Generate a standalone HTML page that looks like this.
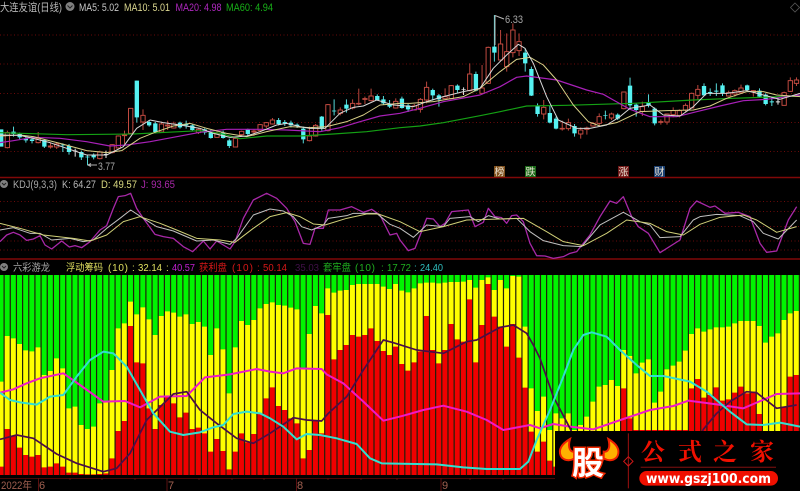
<!DOCTYPE html>
<html><head><meta charset="utf-8"><style>
html,body{margin:0;padding:0;background:#000;width:800px;height:491px;overflow:hidden}
svg{display:block;position:absolute;left:0;top:0}
text{font-family:"Liberation Sans","Noto Sans CJK SC",sans-serif}
.n{vector-effect:non-scaling-stroke;fill:none;stroke-linejoin:round}
</style></head><body>
<svg width="800" height="491" viewBox="0 0 800 491" xmlns="http://www.w3.org/2000/svg" style="filter:blur(.3px)">
<rect width="800" height="491" fill="#000"/>
<!-- grid main -->
<g stroke="#6a0a0a" stroke-width="1" stroke-dasharray="1 2.5">
<path d="M0 35H800M0 64H800M0 93.5H800M0 122.5H800M0 151.5H800"/>
<path d="M0 201.5H800M0 211.5H800M0 226.5H800M0 241H800M0 250H800"/>
</g>
<path d="M0 177.5H800M0 259H800" stroke="#800808" stroke-width="1.6"/>
<!-- candles -->
<g transform="translate(1.2,0) scale(6.165,.33333)">
<path class="n" stroke="#b8453c" stroke-width="1" d="M1 392V445M6 396V430M8 428V446M9 428V447M16 452V478M18 432V460M19 406V446M20 392V432M21 325V402M23 328V390M26 365V396M27 362V390M28 365V386M32 384V402M35 394V412M38 414V441M39 392V410M41 388V408M42 372V394M43 366V384M44 354V374M50 380V424M51 372V410M53 312V394M55 322V346M57 298V328M58 266V316M59 290V312M60 266V304M64 295V326M67 312V330M68 294V338M69 245V310M72 265V296M73 255V296M76 190V274M78 195V282M79 140V252M81 90V182M82 100V215M83 70V172M84 100V168M88 300V358M91 362V392M92 356V392M94 382V416M95 380V404M96 366V380M97 340V378M99 338V360M101 276V328M104 305V348M107 358V374M108 340V374M109 322V352M110 328V352M111 310V336M112 278V326M113 255V298M118 272V290M119 268V290M120 254V280M122 270V290M127 275V316M128 232V276M129 232V258"/>
<path class="n" stroke="#55d8d8" stroke-width="1" d="M2 380V410M3 398V418M4 408V428M5 408V430M7 418V444M10 430V456M11 432V464M13 452V480M14 464V496M15 460V478M24 360V380M25 366V400M22 242V368M29 365V386M30 362V386M31 372V392M33 385V404M34 390V416M36 392V416M37 416V444M40 386V406M45 354V376M46 360V378M47 362V382M48 370V384M49 380V430M52 348V392M54 298V346M56 298V338M61 283V302M62 288V314M63 300V324M65 290V326M66 312V336M70 266V302M71 282V320M74 253V278M77 215V274M80 45V185M85 145V215M86 200V288M87 310V350M89 318V370M90 350V388M93 372V410M98 332V358M100 340V360M102 233V330M103 310V350M105 283V322M106 322V376M114 250V288M115 265V288M116 250V288M117 250V288M121 254V272M123 265V292M124 280V316M125 290V318"/>
<path class="n" stroke="#e8e8e8" stroke-width="1" d="M12 446V470M17 452V474M75 262V285M126 296V314"/>
<path class="n" style="fill:#000" stroke="#c04a40" stroke-width="1" d="M.65 398h.7V443h-.7zM5.65 415h.7V428h-.7zM7.65 438h.7V441h-.7zM8.65 432h.7V441h-.7zM15.65 456h.7V476h-.7zM17.65 434h.7V458h-.7zM18.65 408h.7V444h-.7zM19.65 405h.7V407h-.7zM20.65 325h.7V400h-.7zM22.65 346h.7V366h-.7zM25.65 372h.7V396h-.7zM26.65 375h.7V378h-.7zM27.65 372h.7V384h-.7zM31.65 388h.7V398h-.7zM34.65 400h.7V412h-.7zM37.65 415h.7V441h-.7zM38.65 394h.7V404h-.7zM40.65 393h.7V396h-.7zM41.65 374h.7V392h-.7zM42.65 368h.7V378h-.7zM43.65 360h.7V372h-.7zM49.65 408h.7V422h-.7zM50.65 376h.7V408h-.7zM52.65 314h.7V392h-.7zM54.65 330h.7V340h-.7zM56.65 310h.7V324h-.7zM57.65 310h.7V312h-.7zM58.65 296h.7V298h-.7zM59.65 288h.7V302h-.7zM63.65 304h.7V324h-.7zM66.65 318h.7V330h-.7zM67.65 298h.7V328h-.7zM68.65 262h.7V300h-.7zM71.65 290h.7V296h-.7zM72.65 257h.7V296h-.7zM75.65 222h.7V272h-.7zM77.65 264h.7V280h-.7zM78.65 142h.7V250h-.7zM80.65 132h.7V180h-.7zM81.65 155h.7V200h-.7zM82.65 90h.7V158h-.7zM83.65 125h.7V152h-.7zM87.65 322h.7V342h-.7zM90.65 385h.7V387h-.7zM91.65 368h.7V386h-.7zM93.65 390h.7V402h-.7zM94.65 384h.7V388h-.7zM95.65 370h.7V378h-.7zM96.65 350h.7V370h-.7zM98.65 342h.7V354h-.7zM100.65 276h.7V326h-.7zM103.65 320h.7V334h-.7zM106.65 365h.7V367h-.7zM107.65 342h.7V366h-.7zM108.65 332h.7V344h-.7zM109.65 332h.7V346h-.7zM110.65 316h.7V330h-.7zM111.65 280h.7V324h-.7zM112.65 268h.7V286h-.7zM117.65 278h.7V288h-.7zM118.65 272h.7V282h-.7zM119.65 264h.7V278h-.7zM121.65 272h.7V276h-.7zM126.65 278h.7V316h-.7zM127.65 242h.7V274h-.7zM128.65 240h.7V250h-.7z"/>
<path fill="#55f2f2" d="M-.35 388h.7V440h-.7zM1.65 395h.7V402h-.7zM2.65 402h.7V412h-.7zM3.65 416h.7V421h-.7zM4.65 418h.7V423h-.7zM6.65 420h.7V440h-.7zM9.65 434h.7V436h-.7zM10.65 438h.7V456h-.7zM12.65 456h.7V472h-.7zM13.65 470h.7V472h-.7zM14.65 466h.7V472h-.7zM21.65 242h.7V352h-.7zM23.65 366h.7V376h-.7zM24.65 370h.7V396h-.7zM28.65 368h.7V382h-.7zM29.65 372h.7V376h-.7zM30.65 376h.7V390h-.7zM32.65 388h.7V398h-.7zM33.65 398h.7V414h-.7zM35.65 398h.7V414h-.7zM36.65 421h.7V438h-.7zM39.65 388h.7V402h-.7zM44.65 360h.7V372h-.7zM45.65 366h.7V370h-.7zM46.65 368h.7V376h-.7zM47.65 374h.7V378h-.7zM48.65 386h.7V418h-.7zM51.65 350h.7V384h-.7zM53.65 332h.7V334h-.7zM55.65 314h.7V326h-.7zM60.65 288h.7V300h-.7zM61.65 298h.7V310h-.7zM62.65 312h.7V320h-.7zM64.65 296h.7V324h-.7zM65.65 316h.7V328h-.7zM69.65 270h.7V286h-.7zM70.65 286h.7V298h-.7zM73.65 257h.7V270h-.7zM76.65 222h.7V272h-.7zM79.65 140h.7V158h-.7zM84.65 158h.7V190h-.7zM85.65 207h.7V287h-.7zM86.65 318h.7V342h-.7zM88.65 339h.7V368h-.7zM89.65 356h.7V386h-.7zM92.65 378h.7V400h-.7zM97.65 345h.7V347h-.7zM99.65 344h.7V356h-.7zM101.65 257h.7V316h-.7zM102.65 314h.7V330h-.7zM104.65 306h.7V316h-.7zM105.65 326h.7V370h-.7zM113.65 258h.7V286h-.7zM114.65 276h.7V279h-.7zM115.65 272h.7V275h-.7zM116.65 256h.7V280h-.7zM120.65 256h.7V270h-.7zM122.65 272h.7V290h-.7zM123.65 284h.7V312h-.7zM124.65 304h.7V307h-.7z"/>
<path fill="#e8e8e8" d="M11.65 452h.7V454h-.7zM16.65 462h.7V464h-.7zM74.65 268h.7V270h-.7zM125.65 304h.7V307h-.7z"/>
</g>
<!-- MA lines (coords are x*3,y*3) -->
<g transform="scale(.33333)">
<polyline class="n" stroke="#14a014" stroke-width="1.2" points="0,398 200,404 400,402 500,397 600,392 660,400 720,416 800,408 900,408 1000,402 1100,395 1200,383 1260,378 1330,368 1440,347 1500,335 1580,318 1700,316 1900,310 2080,300 2200,295 2400,288"/>
<polyline class="n" stroke="#a820b8" stroke-width="1.2" points="0,428 40,422 100,412 180,415 260,425 330,438 380,435 450,425 520,412 600,397 680,388 780,388 860,390 960,395 1020,383 1080,365 1140,348 1200,340 1260,325 1330,305 1440,285 1500,260 1550,232 1580,228 1670,240 1760,270 1810,283 1840,300 1890,328 1950,350 2030,350 2090,335 2160,318 2230,302 2300,298 2400,285"/>
<polyline class="n" stroke="#d8d088" stroke-width="1" points="0,408 60,405 100,410 180,430 260,452 320,458 365,452 420,415 470,395 520,378 570,370 620,385 680,400 740,410 800,395 870,380 930,383 980,380 1040,365 1090,345 1140,315 1200,310 1230,310 1300,305 1390,290 1440,265 1500,215 1550,178 1590,172 1630,195 1670,240 1720,315 1765,365 1800,378 1850,368 1920,335 2000,332 2080,330 2130,318 2180,295 2240,275 2290,275 2330,285 2400,290"/>
<polyline class="n" stroke="#d8d8d8" stroke-width="1" points="0,405 60,406 100,415 150,428 200,445 260,465 320,465 370,440 410,385 450,360 490,368 540,375 600,385 640,400 690,412 740,408 780,395 830,375 860,370 900,380 930,385 975,385 1020,340 1060,322 1090,318 1130,300 1180,315 1240,320 1280,305 1330,290 1390,275 1440,265 1480,205 1520,165 1555,133 1575,145 1600,190 1640,290 1675,360 1730,385 1770,385 1820,375 1860,350 1890,325 1950,315 1990,345 2040,348 2080,320 2120,280 2180,280 2240,272 2290,285 2340,298 2400,280"/>
<!-- KDJ: y offset 175*3=525 -->
<g transform="translate(0,525)">
<polyline class="n" stroke="#a828a8" stroke-width="1.3" points="0,200 20,180 40,172 60,180 80,196 100,192 120,182 135,210 155,222 185,198 208,216 225,212 245,218 270,200 300,165 320,152 340,100 355,65 375,62 392,55 410,100 430,130 465,178 490,185 520,190 550,215 578,230 610,198 630,222 650,198 690,222 705,200 730,130 760,75 800,55 830,70 860,100 885,140 910,205 930,208 945,160 970,160 985,105 1020,105 1055,95 1090,112 1115,103 1140,120 1170,180 1190,175 1200,195 1225,227 1245,220 1280,130 1300,132 1320,155 1335,145 1355,110 1405,105 1425,155 1450,142 1465,100 1485,125 1505,128 1520,145 1535,122 1550,120 1570,140 1590,205 1610,242 1635,243 1660,250 1690,245 1710,235 1730,230 1770,180 1800,125 1830,78 1850,85 1870,65 1895,125 1915,155 1945,175 1980,233 2040,195 2070,100 2090,78 2130,97 2145,93 2175,115 2215,112 2250,125 2280,205 2300,232 2330,228 2365,135 2390,95"/>
<polyline class="n" stroke="#c0c0c0" stroke-width="1" points="0,165 40,158 90,175 120,175 155,195 210,190 250,200 280,195 320,160 360,130 392,105 430,130 470,155 520,168 590,198 640,195 690,208 710,190 760,120 810,102 850,108 880,125 905,155 935,165 970,150 985,130 1040,122 1060,115 1130,115 1170,148 1200,160 1240,187 1280,150 1330,155 1350,130 1410,125 1435,140 1465,122 1500,132 1550,130 1590,170 1630,197 1690,212 1745,215 1800,150 1870,112 1920,140 1950,150 1980,188 2040,185 2080,135 2100,125 2150,118 2220,122 2260,140 2290,175 2335,192 2390,135"/>
<polyline class="n" stroke="#d0d078" stroke-width="1" points="0,145 60,160 130,180 220,190 270,198 320,180 370,140 420,125 480,145 530,165 590,190 660,195 705,202 760,160 810,125 860,113 900,125 940,147 975,150 1040,130 1100,117 1135,117 1200,140 1260,170 1330,155 1400,135 1500,132 1570,130 1640,170 1690,200 1750,212 1820,175 1880,135 1950,145 2000,170 2050,180 2100,148 2160,127 2230,120 2270,135 2330,172 2390,155"/>
</g>
</g>
<!-- annotations -->
<path d="M495 15.5V45M495 15.5L504 19" stroke="#b8b8b8" stroke-width="1" fill="none"/>
<path d="M88 165H97M88 165l3 -1.5M88 165l3 1.5" stroke="#b0b0b0" stroke-width="1" fill="none"/>
<text x="505" y="23" font-size="11" fill="#a8a8a8" textLength="18" lengthAdjust="spacingAndGlyphs">6.33</text>
<text x="98" y="170" font-size="11" fill="#a8a8a8" textLength="17" lengthAdjust="spacingAndGlyphs">3.77</text>
<path d="M795 3l4.500 4.500l-4.500 4.500l-4.500-4.500z" fill="none" stroke="#555" stroke-width=".8"/>
<!-- tag boxes -->
<g font-size="10" text-anchor="middle" fill="#e8e0d0">
<rect x="494" y="166" width="11" height="11" fill="#80501c"/><text x="499.500" y="175.500">榜</text>
<rect x="525" y="166" width="11" height="11" fill="#1a6a18"/><text x="530.500" y="175.500">跌</text>
<rect x="618" y="166" width="11" height="11" fill="#701818"/><text x="623.500" y="175.500">涨</text>
<rect x="654" y="166" width="11" height="11" fill="#1a3f70"/><text x="659.500" y="175.500">财</text>
</g>
<!-- headers -->
<text x="0" y="11" font-size="11" fill="#b8b8b8" textLength="62" lengthAdjust="spacingAndGlyphs">大连友谊(日线)</text>
<circle cx="70" cy="6.500" r="4.500" fill="#808080"/><path d="M67.500 5.500l2.500 2.500l2.500-2.500" stroke="#222" fill="none" stroke-width="1"/>
<g font-size="11">
<text x="79" y="11" fill="#c8c8c8" textLength="40" lengthAdjust="spacingAndGlyphs">MA5: 5.02</text>
<text x="124" y="11" fill="#dcd890" textLength="46" lengthAdjust="spacingAndGlyphs">MA10: 5.01</text>
<text x="175.500" y="11" fill="#b028c0" textLength="46" lengthAdjust="spacingAndGlyphs">MA20: 4.98</text>
<text x="226" y="11" fill="#18b018" textLength="47" lengthAdjust="spacingAndGlyphs">MA60: 4.94</text>
<text x="13" y="188" fill="#a8a8a8" textLength="44" lengthAdjust="spacingAndGlyphs">KDJ(9,3,3)</text>
<text x="62" y="188" fill="#b8b8b8" textLength="34" lengthAdjust="spacingAndGlyphs">K: 64.27</text>
<text x="101" y="188" fill="#d8d880" textLength="36" lengthAdjust="spacingAndGlyphs">D: 49.57</text>
<text x="141" y="188" fill="#a828a8" textLength="34" lengthAdjust="spacingAndGlyphs">J: 93.65</text>
</g>
<circle cx="4" cy="184" r="4" fill="#808080"/><path d="M2 183l2 2l2-2" stroke="#222" fill="none"/>
<circle cx="4" cy="267" r="4" fill="#808080"/><path d="M2 266l2 2l2-2" stroke="#222" fill="none"/>
<g font-size="10">
<text x="13" y="271" fill="#a8a8a8" textLength="37" lengthAdjust="spacingAndGlyphs">六彩游龙</text>
<text x="66" y="271" fill="#e0e060" textLength="37" lengthAdjust="spacingAndGlyphs">浮动筹码</text>
<text x="108" y="271" fill="#e0e060" textLength="20" lengthAdjust="spacing">(10)</text>
<text x="132" y="271" fill="#e0e060">:</text>
<text x="138" y="271" fill="#e0e060" textLength="24" lengthAdjust="spacingAndGlyphs">32.14</text>
<text x="166" y="271" fill="#e0e060">:</text>
<text x="172" y="271" fill="#c020d0" textLength="23" lengthAdjust="spacingAndGlyphs">40.57</text>
<text x="199" y="271" fill="#d81818" textLength="28" lengthAdjust="spacingAndGlyphs">获利盘</text>
<text x="232" y="271" fill="#d81818" textLength="21" lengthAdjust="spacing">(10)</text>
<text x="257" y="271" fill="#d81818">:</text>
<text x="263" y="271" fill="#d81818" textLength="24" lengthAdjust="spacingAndGlyphs">50.14</text>
<text x="295" y="271" fill="#401048" textLength="24" lengthAdjust="spacingAndGlyphs">35.03</text>
<text x="323" y="271" fill="#20b020" textLength="28" lengthAdjust="spacingAndGlyphs">套牢盘</text>
<text x="355" y="271" fill="#20b020" textLength="20" lengthAdjust="spacing">(10)</text>
<text x="381" y="271" fill="#20b020">:</text>
<text x="387" y="271" fill="#20b020" textLength="24" lengthAdjust="spacingAndGlyphs">17.72</text>
<text x="414" y="271" fill="#30c0c0">:</text>
<text x="420" y="271" fill="#30c0c0" textLength="23" lengthAdjust="spacingAndGlyphs">24.40</text>
</g>
<!-- bars -->
<rect x="0" y="275" width="800" height="200" fill="#00f400"/>
<g transform="translate(-2.165,270) scale(6.165,.33333)">
<path fill="#ffff00" d="M0 615V335H1V198H2V205H3V222H4V241H5V244H6V232H7V315H8V303H9V265H10V295H11V415H12V410H13V465H14V477H15V470H16V400H17V395H18V300H19V175H20V160H21V95H22V133H23V112H24V148H25V195H26V138H27V124H28V128H29V140H30V133H31V162H32V156H33V170H34V255H35V175H36V238H37V370H38V232H39V153H40V165H41V150H42V115H43V102H44V97H45V105H46V107H47V113H48V118H49V295H50V192H51V108H52V130H53V55H54V68H55V62H56V60H57V45H58V42H61V42H62V50H63V57H64V42H65V62H66V67H67V55H68V40H69V38H71V40H72V38H73V36H75V35H76V30H77V53H78V30H79V22H80V60H81V30H82V55H83V18H84V20H85V170H86V355H87V423H88V380H89V480H90V430H91V445H92V430H93V480H94V465H95V440H96V395H97V350H98V345H99V330H100V348H101V240H102V258H103V310H104V278H105V268H106V398H107V365H108V298H109V287H110V275H111V242H112V192H113V175H114V185H115V178H116V172H118V170H119V160H120V153H123V168H124V218H125V200H126V190H127V150H128V130H129V123H130V615z"/>
<path fill="#f00000" d="M0 615V590H1V477H2V497H3V533H4V555H5V560H6V555H7V592H8V590H9V580H10V590H11V608H13V612H14V613H16V612H17V610H18V565H19V483H20V453H21V168H22V277H23V280H24V415H25V477H26V405H27V380H28V400H29V442H30V428H31V477H32V473H33V490H34V545H35V507H36V543H37V598H38V545H39V490H40V517H41V492H42V432H43V385H44V352H45V408H46V420H47V445H48V460H49V565H50V540H51V450H52V490H53V135H54V268H55V240H56V225H57V195H58V200H59V195H60V175H61V213H62V243H63V255H64V230H65V282H66V302H67V277H68V245H69V138H70V240H71V280H72V240H73V162H74V208H75V215H76V88H77V277H78V165H79V42H80V140H81V170H82V230H83V162H84V263H85V353H86V485H87V545H88V515H89V572H90V590H101V355H102V445H103V480H112V355H113V327H114V383H115V375H116V352H117V392H118V388H119V368H120V350H121V370H122V365H123V432H124V490H127V410H128V320H129V315H130V615z"/>
</g>
<path d="M3.500 375H800" stroke="#20200c" stroke-width="200" stroke-dasharray="1.200 4.965" fill="none"/>
<g transform="translate(0,270) scale(.33333)">
<polyline class="n" stroke="#f018c8" stroke-width="2" points="0,368 40,358 80,340 120,325 190,310 240,345 310,395 375,393 420,412 480,380 560,378 615,322 690,313 770,297 810,305 850,310 890,295 965,297 980,313 1030,340 1090,395 1150,452 1210,437 1270,420 1330,407 1400,425 1460,450 1510,480 1590,465 1620,475 1660,462 1710,470 1780,478 1870,447 1950,420 2020,408 2065,392 2150,403 2230,415 2330,372 2400,370"/>
<polyline class="n" stroke="#4a0c48" stroke-width="1.700" points="0,508 50,495 100,505 170,552 230,580 310,605 350,595 390,550 440,450 520,372 560,365 600,420 650,460 710,505 760,520 810,490 880,443 920,450 965,453 985,430 1040,380 1090,300 1150,210 1180,218 1250,240 1330,250 1400,215 1430,210 1500,172 1540,165 1580,190 1600,225 1620,265 1660,380 1710,475 1730,520"/>
<polyline class="n" stroke="#4a0c48" stroke-width="1.700" points="2090,520 2110,478 2150,430 2190,395 2240,365 2270,368 2330,415 2390,405"/>
<polyline class="n" stroke="#30e0d0" stroke-width="2" points="0,368 30,390 60,397 110,404 150,380 190,375 230,320 270,270 310,245 340,250 380,290 420,360 460,430 510,485 550,495 600,487 640,472 670,465 700,432 740,425 780,430 810,445 850,470 890,508 920,492 960,495 1010,505 1070,522 1110,565 1145,580 1310,583 1390,592 1460,597 1560,597 1585,575 1610,510 1650,420 1690,320 1720,240 1750,195 1775,187 1820,200 1860,240 1910,285 1950,318 1990,318 2070,335 2120,365 2190,425 2240,463 2290,465 2340,458 2400,470"/>
</g>
<!-- axis -->
<rect x="0" y="475" width="800" height="16" fill="#000"/>
<path d="M0 478.500H800" stroke="#4a0808" stroke-width="1"/>
<path d="M38.500 478V491M167 478V491M296.500 478V491M441 478V491" stroke="#5a1010" stroke-width="1"/>
<path d="M70 478v2M102 478v2M135 478v2M199 478v2M232 478v2M264 478v2M328 478v2M361 478v2M397 478v2M470 478v2M503 478v2" stroke="#5a1010" stroke-width="1"/>
<g font-size="11" fill="#a06050">
<text x="1" y="489" textLength="31" lengthAdjust="spacingAndGlyphs">2022年</text>
<text x="39" y="489">6</text>
<text x="168" y="489">7</text>
<text x="297" y="489">8</text>
<text x="442" y="489">9</text>
</g>
<!-- logo -->
<rect x="555" y="431" width="245" height="60" fill="#000"/>
<g transform="translate(540,425) scale(.33333)">
<path d="M90 42C68 55 54 72 62 92C68 106 88 110 104 100L104 80C92 82 82 70 90 42z" fill="#ffb000" stroke="#f02000" stroke-width="6"/>
<path d="M205 42C227 55 241 72 233 92C227 106 207 110 191 100L191 80C203 82 213 70 205 42z" fill="#ffb000" stroke="#f02000" stroke-width="6"/>
<path d="M265 25V190" stroke="#a01010" stroke-width="3"/>
<path d="M265 95l14 14l-14 14l-14-14z" fill="none" stroke="#d01818" stroke-width="3"/>
<path d="M302 127H708" stroke="#600c0c" stroke-width="4"/>
<rect x="298" y="138" width="416" height="44" rx="22" fill="#f01000"/>
</g>
<text x="572" y="474" font-size="32" font-weight="bold" fill="#fff" stroke="#f02800" stroke-width="3" style="font-family:'Noto Sans CJK SC',sans-serif;paint-order:stroke">股</text>
<g font-size="24" font-weight="bold" fill="#f01000" text-anchor="middle">
<text x="653" y="460" style="font-family:'Noto Serif CJK SC',serif">公</text>
<text x="690" y="460" style="font-family:'Noto Serif CJK SC',serif">式</text>
<text x="725" y="460" style="font-family:'Noto Serif CJK SC',serif">之</text>
<text x="762" y="460" style="font-family:'Noto Serif CJK SC',serif">家</text>
</g>
<text x="646" y="483" font-size="13.500" font-weight="bold" fill="#fff" textLength="125" lengthAdjust="spacingAndGlyphs" style="font-family:'DejaVu Sans',sans-serif">www.gszj100.com</text>
</svg>
</body></html>
